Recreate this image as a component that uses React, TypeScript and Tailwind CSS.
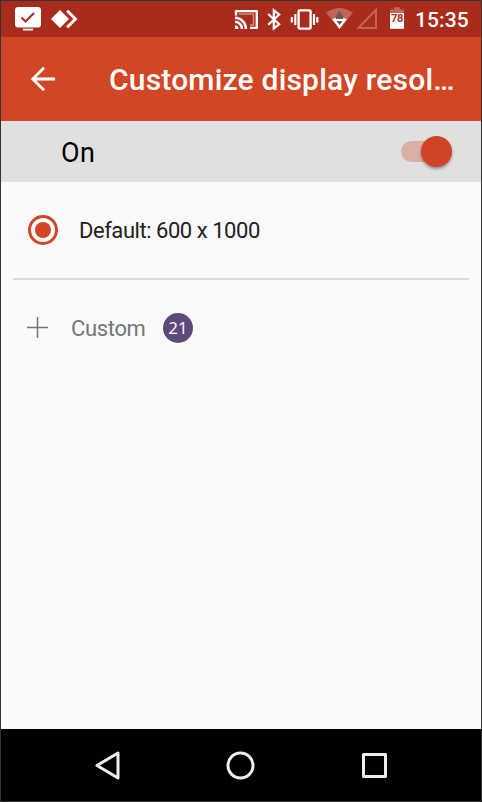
function StatusBar() {
  return (
    <div className="flex h-9 shrink-0 bg-[#a82b1b] text-white">
      <svg className="h-9 w-[47px]" viewBox="1 1 47 36" fill="none">
        <rect x="15" y="7" width="26" height="20.5" rx="3" fill="white" />
        <rect x="23" y="28.7" width="10" height="1.8" fill="white" />
        <path d="M21.5 17.5l4 4L34 13" stroke="#a82b1b" strokeWidth="2" />
      </svg>
      <svg className="h-9 w-[182px]" viewBox="48 1 182 36" fill="none">
        <path d="M60 10l9 9-9 9-9-9z" fill="white" />
        <path d="M67.2 10.8L75.4 19l-8.2 8.2" stroke="white" strokeWidth="3" />
      </svg>
      <svg className="h-9 w-8" viewBox="230 1 32 36" fill="none">
        <path d="M236 15.5v-4.4h20.8v16.8H250" stroke="white" strokeWidth="2.4" strokeLinejoin="round" />
        <path d="M239 14h14.5v11h-3.5" stroke="#d58d84" strokeWidth="1.4" />
        <path d="M235 17.8A11.1 11.1 0 0 1 246 28.9M235 21.8a7.1 7.1 0 0 1 7 7.1" stroke="white" strokeWidth="2.4" />
        <path d="M235 25.3a3.6 3.6 0 0 1 3.6 3.6H235z" fill="white" />
      </svg>
      <svg className="h-9 w-[26px]" viewBox="262 1 26 36" fill="none">
        <path d="M268.2 14l11 10.2-5.4 4.3V10.3l5.4 4.3-11 10.2" stroke="white" strokeWidth="2.2" />
      </svg>
      <svg className="h-9 w-9" viewBox="288 1 36 36" fill="none" stroke="white" strokeWidth="2.2">
        <rect x="298.6" y="10.4" width="12" height="18.2" rx="1" strokeWidth="2.4" />
        <path d="M295.3 14v11M291.8 17v5.5M314 14v11M317.3 17v5.5" />
      </svg>
      <svg className="h-9 w-[30px]" viewBox="324 1 30 36">
        <path d="M326 12.7Q339.5 3.2 353 12.7L339.5 29z" fill="#c36459" />
        <path d="M332.2 19.3Q339.5 14.5 346.8 19.3L339.5 29z" fill="white" />
        <path d="M339.5 11l3.8 5.5v2.5h-7.6v-2.5zM336.5 21h6l-3 4z" fill="#685a53" />
      </svg>
      <svg className="h-9 w-[30px]" viewBox="354 1 30 36">
        <path d="M376 9.8V28h-17.5z" fill="none" stroke="#c36459" strokeWidth="2" />
      </svg>
      <svg className="h-9 w-[31px]" viewBox="384 1 31 36">
        <path d="M390 13V9.5h4V7.3h6v2.2h4V13z" fill="#c36459" />
        <path d="M390 13h14v15.8h-14z" fill="white" />
        <text x="397" y="22" textAnchor="middle" fill="#a82b1b" className="font-[Roboto] text-[11px] font-bold tracking-[-0.4px]">78</text>
      </svg>
      <span className="mt-px text-[21px] leading-9 font-medium tracking-[0.1px]">15:35</span>
    </div>
  );
}

function Toolbar() {
  return (
    <header className="flex h-[84px] shrink-0 items-center bg-[#d14625] text-white">
      <svg className="ml-[29px] h-6 w-[26px] shrink-0" viewBox="30 67 26 24" fill="none" stroke="white" strokeWidth="2.8">
        <path d="M55 79H33M44 67.8L32.8 79 44 90.2" />
      </svg>
      <h1 className="mt-0.5 ml-[53px] text-[30px] leading-9 font-medium tracking-[0.2px] whitespace-nowrap">Customize display resol…</h1>
    </header>
  );
}

function Switch() {
  return (
    <div className="relative mr-[29px] h-[31px] w-[51px]">
      <div className="mt-[5px] h-[21px] w-10 rounded-full bg-[#dcaea5]" />
      <div className="absolute top-0 right-0 size-[31px] rounded-full bg-[#ce4424] shadow-[0_2px_3px_rgba(0,0,0,0.35)]" />
    </div>
  );
}

function NavigationBar() {
  return (
    <nav className="flex h-[72px] shrink-0 bg-black">
      <svg className="h-[72px] w-full" viewBox="1 729 480 72" fill="none" stroke="#eeeeee" strokeWidth="3" strokeLinejoin="round">
        <path d="M118 753v25l-21-12.5z" />
        <circle cx="240.5" cy="765.5" r="12.5" />
        <rect x="363.5" y="754.5" width="22" height="22" />
      </svg>
    </nav>
  );
}

export default function App() {
  return (
    <div className="flex h-[802px] w-[482px] flex-col overflow-hidden border border-[#333333] bg-[#fafafa] font-[Roboto,sans-serif]">
      <StatusBar />
      <Toolbar />
      <div className="flex h-[61px] shrink-0 items-center justify-between bg-[#e0e0e0]">
        <span className="mt-0.5 ml-[60px] text-[27px] leading-8 tracking-[0.5px] text-black">On</span>
        <Switch />
      </div>
      <main className="flex-1">
        <div className="mx-3 flex h-[98px] items-center border-b-2 border-[#dadada]">
          <div className="ml-[15px] flex size-[30px] items-center justify-center rounded-full border-3 border-[#d14625]">
            <div className="size-4 rounded-full bg-[#d14625]" />
          </div>
          <span className="mt-px ml-[21px] text-[22px] leading-7 tracking-[-0.46px] text-[#212121]">Default: 600 x 1000</span>
        </div>
        <div className="flex h-[95px] items-center pl-[26px]">
          <svg className="size-[21px]" viewBox="0 0 21 21" stroke="#757575" strokeWidth="1.5">
            <path d="M10.5 0v21M0 10.5h21" />
          </svg>
          <span className="mt-0.5 ml-[23px] w-[76px] text-[22px] leading-7 tracking-[-0.35px] text-[#757575]">Custom</span>
          <span className="ml-4 flex size-[30px] items-center justify-center rounded-full bg-[#5f497a] font-['Open_Sans',sans-serif] text-[17px] leading-none font-medium text-white">21</span>
        </div>
      </main>
      <NavigationBar />
    </div>
  );
}
